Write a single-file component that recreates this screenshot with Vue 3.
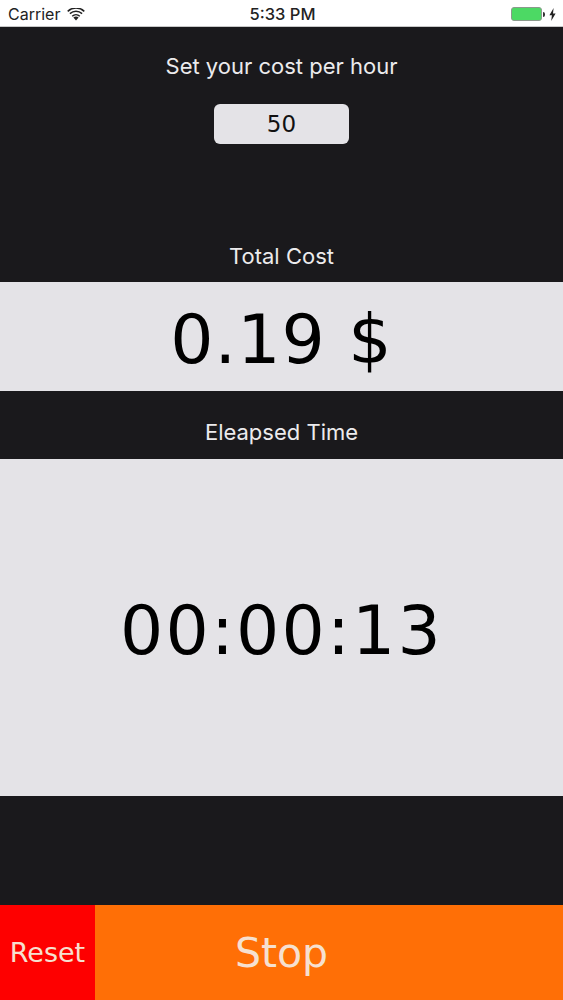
<template>
  <div class="screen">
    <div class="status-bar">
      <div class="status-left">
        <span>Carrier</span>
        <svg class="wifi" viewBox="0 0 18 13" width="18" height="13">
          <path d="M9 12.6 6.4 9.6a3.8 3.8 0 0 1 5.2 0Z" fill="#222" />
          <path d="M4.7 7.7a6.4 6.4 0 0 1 8.6 0l-1 1.1a4.9 4.9 0 0 0-6.6 0Z" fill="#222" />
          <path d="M2.4 5.1a9.8 9.8 0 0 1 13.2 0l-1 1.2a8.2 8.2 0 0 0-11.2 0Z" fill="#222" />
          <path d="M.2 2.7a13 13 0 0 1 17.6 0l-1 1.2A11.4 11.4 0 0 0 1.2 3.9Z" fill="#222" />
        </svg>
      </div>
      <div class="status-time">5:33 PM</div>
      <div class="status-right">
        <div class="battery"></div>
        <div class="battery-tip"></div>
        <svg class="bolt" viewBox="0 0 7 13" width="7" height="13">
          <path d="M4.6 0 .4 7.2h2.5L2.2 13l4.4-7.6H4Z" fill="#222" />
        </svg>
      </div>
    </div>

    <div class="rate-section">
      <div class="label rate-label">Set your cost per hour</div>
      <div class="rate-input">{{ rate }}</div>
    </div>

    <div class="label total-label">Total Cost</div>
    <div class="band cost-band">{{ cost }} $</div>

    <div class="label elapsed-label">Eleapsed Time</div>
    <div class="band time-band">{{ elapsed }}</div>

    <div class="spacer"></div>

    <div class="buttons">
      <div class="btn reset">Reset</div>
      <div class="btn stop">Stop</div>
    </div>
  </div>
</template>

<script setup>
import { ref } from 'vue'

const rate = ref(50)
const cost = ref('0.19')
const elapsed = ref('00:00:13')
</script>

<style>
html, body {
  margin: 0;
  background: #1a191c;
}
</style>

<style scoped>
.screen {
  width: 563px;
  height: 1000px;
  display: flex;
  flex-direction: column;
  background: #1a191c;
  font-family: "DejaVu Sans", sans-serif;
  overflow: hidden;
}

.status-bar {
  height: 27px;
  box-sizing: border-box;
  padding: 2px 7px 0 8px;
  display: flex;
  align-items: center;
  position: relative;
  background: #fff;
  border-bottom: 1px solid #c8c8c8;
  color: #222;
  font-family: "Inter", "Liberation Sans", sans-serif;
  font-size: 16px;
}

.status-left {
  display: flex;
  align-items: center;
  gap: 7px;
}

.status-time {
  position: absolute;
  left: 2px;
  right: 0;
  text-align: center;
  font-size: 16.5px;
  font-weight: 500;
}

.status-right {
  margin-left: auto;
  display: flex;
  align-items: center;
}

.battery {
  width: 31px;
  height: 14px;
  border-radius: 3px;
  background: #4cd964;
  border: 1px solid #8a9a8c;
  box-sizing: border-box;
}

.battery-tip {
  width: 2px;
  height: 5px;
  margin-left: 1px;
  background: #333;
  border-radius: 0 2px 2px 0;
}

.bolt {
  margin-left: 4px;
}

.label {
  color: #ecebed;
  text-align: center;
  font-family: "Inter", "Liberation Sans", sans-serif;
  font-size: 22px;
}

.rate-section {
  height: 166px;
  display: flex;
  flex-direction: column;
  align-items: center;
}

.rate-label {
  margin-top: 26px;
  height: 26px;
  line-height: 26px;
}

.rate-input {
  width: 135px;
  height: 40px;
  margin-top: 25px;
  border-radius: 6px;
  background: #e4e3e7;
  color: #111;
  font-size: 23px;
  display: flex;
  align-items: center;
  justify-content: center;
}

.total-label {
  height: 89px;
  line-height: 26px;
  box-sizing: border-box;
  padding-top: 50px;
}

.band {
  background: #e4e3e7;
  color: #000;
  display: flex;
  align-items: center;
  justify-content: center;
}

.cost-band {
  height: 109px;
  box-sizing: border-box;
  padding-top: 5px;
  font-size: 68px;
  letter-spacing: 1px;
}

.elapsed-label {
  height: 68px;
  line-height: 68px;
  box-sizing: border-box;
  padding-top: 7px;
}

.time-band {
  height: 337px;
  box-sizing: border-box;
  padding-top: 6px;
  font-size: 68px;
  letter-spacing: 2.2px;
}

.spacer {
  flex: 1;
}

.buttons {
  height: 95px;
  display: flex;
}

.btn {
  display: flex;
  align-items: center;
  justify-content: center;
  color: #f6e0d0;
}

.reset {
  width: 95px;
  background: #fe0000;
  font-size: 27px;
}

.stop {
  flex: 1;
  padding-right: 95px;
  background: #ff6f06;
  font-size: 41px;
}
</style>
